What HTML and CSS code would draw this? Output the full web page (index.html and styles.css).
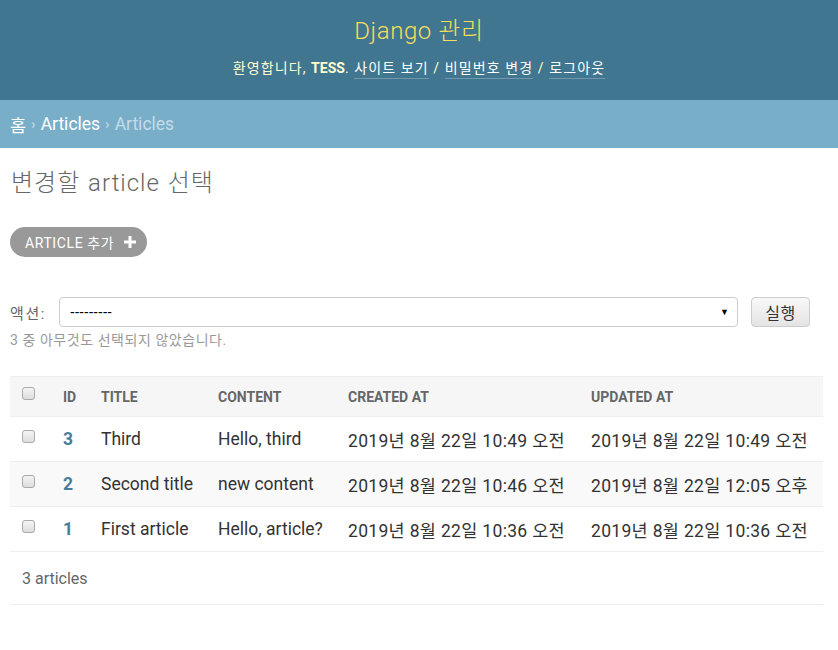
FILE: index.html
```html
<!DOCTYPE html>
<html lang="ko">
<head>
<meta charset="utf-8">
<title>Django 관리</title>
<link rel="stylesheet" href="styles.css">
</head>
<body>
<header class="header">
  <h1 class="brand">Django 관리</h1>
  <div class="user-tools">환영합니다, <strong>TESS</strong>. <a href="#">사이트 보기</a> / <a href="#">비밀번호 변경</a> / <a href="#">로그아웃</a></div>
</header>
<nav class="breadcrumbs"><a href="#">홈</a><span class="sep">›</span><a href="#">Articles</a><span class="sep">›</span><span class="current">Articles</span></nav>
<main class="content">
  <h1 class="page-title">변경할 article 선택</h1>
  <div class="tools"><a class="addlink" href="#">ARTICLE 추가 <svg class="plus" width="12" height="12" viewBox="0 0 12 12"><rect x="4.5" y="0" width="3" height="12" fill="#fff"/><rect x="0" y="4.5" width="12" height="3" fill="#fff"/></svg></a></div>
  <div class="actions">
    <label class="action-label">액션:</label>
    <div class="select"><span>---------</span><span class="arrow">▼</span></div>
    <button class="go">실행</button>
  </div>
  <div class="counter">3 중 아무것도 선택되지 않았습니다.</div>
  <table class="result">
    <colgroup><col class="c1"><col class="c2"><col class="c3"><col class="c4"><col class="c5"><col class="c6"></colgroup>
    <thead>
      <tr><th><span class="cb"></span></th><th>ID</th><th>TITLE</th><th>CONTENT</th><th>CREATED AT</th><th>UPDATED AT</th></tr>
    </thead>
    <tbody>
      <tr><td><span class="cb"></span></td><td><a class="id" href="#">3</a></td><td>Third</td><td>Hello, third</td><td class="dt">2019년 8월 22일 10:49 오전</td><td class="dt">2019년 8월 22일 10:49 오전</td></tr>
      <tr class="alt"><td><span class="cb"></span></td><td><a class="id" href="#">2</a></td><td>Second title</td><td>new content</td><td class="dt">2019년 8월 22일 10:46 오전</td><td class="dt">2019년 8월 22일 12:05 오후</td></tr>
      <tr><td><span class="cb"></span></td><td><a class="id" href="#">1</a></td><td>First article</td><td>Hello, article?</td><td class="dt">2019년 8월 22일 10:36 오전</td><td class="dt">2019년 8월 22일 10:36 오전</td></tr>
    </tbody>
  </table>
  <p class="paginator">3 articles</p>
</main>
</body>
</html>
```

FILE: styles.css
```css
* { box-sizing: border-box; }
body {
  margin: 0;
  font-family: Roboto, "Noto Sans CJK KR", "Liberation Sans", sans-serif;
  color: #333;
  background: #fff;
}
a { text-decoration: none; }
.header {
  background: #417690;
  height: 100px;
  display: flex;
  flex-direction: column;
  align-items: center;
  padding-top: 14px;
}
.brand {
  margin: 0;
  font-size: 24px;
  font-weight: 300;
  line-height: 34px;
  letter-spacing: 0.6px;
  color: #f5dd5d;
}
.user-tools {
  margin-top: 8px;
  font-size: 14px;
  line-height: 24px;
  letter-spacing: 1.1px;
  color: #ffc;
}
.user-tools strong { font-weight: 700; letter-spacing: 0; }
.user-tools a {
  color: #fff;
  padding-bottom: 2px;
  border-bottom: 1px solid rgba(255,255,255,0.25);
}
.breadcrumbs {
  background: #79aec8;
  height: 48px;
  padding: 0 10px;
  display: flex;
  align-items: center;
  gap: 5px;
  font-size: 17.5px;
  color: #c4dce8;
}
.breadcrumbs a { color: #fff; }
.breadcrumbs .sep { font-size: 15px; }
.breadcrumbs .current { color: #c4dce8; }
.content { padding: 20px 15px 0 10px; }
.page-title {
  margin: 0;
  font-size: 24px;
  font-weight: 300;
  line-height: 30px;
  letter-spacing: 1px;
  word-spacing: 1px;
  color: #666;
  padding-left: 1px;
}
.tools { margin-top: 29px; display: flex; }
.addlink {
  display: flex;
  align-items: center;
  gap: 10px;
  height: 30px;
  padding: 0 11px 0 15px;
  border-radius: 15px;
  background: #999;
  color: #fff;
  font-size: 14px;
  font-weight: 400;
  letter-spacing: 0.6px;
}
.plus { display: block; }
.actions {
  margin-top: 40px;
  display: flex;
  align-items: center;
}
.action-label { font-size: 15px; color: #666; width: 49px; letter-spacing: 1.6px; }
.select {
  width: 679px;
  height: 30px;
  border: 1px solid #ccc;
  border-radius: 4px;
  display: flex;
  align-items: center;
  justify-content: space-between;
  padding: 0 8px 0 10px;
  font-family: "Liberation Sans", sans-serif;
  font-size: 14px;
  color: #000;
}
.arrow { font-size: 9px; }
.go {
  margin-left: 13px;
  width: 59px;
  height: 30px;
  border: 1px solid #ccc;
  border-radius: 4px;
  background: linear-gradient(#f8f8f8, #e4e4e4);
  font-family: inherit;
  font-size: 16px;
  letter-spacing: 0.6px;
  color: #333;
  padding: 0;
}
.counter {
  margin-top: 5px;
  font-size: 14px;
  line-height: 17px;
  letter-spacing: 0.55px;
  color: #999;
}
.result {
  margin-top: 27px;
  width: 813px;
  table-layout: fixed;
  border-collapse: collapse;
}
.c1 { width: 41px; }
.c2 { width: 38px; }
.c3 { width: 117px; }
.c4 { width: 130px; }
.c5 { width: 243px; }
.c6 { width: 244px; }
.result th, .result td {
  text-align: left;
  padding: 0 0 0 12px;
  white-space: nowrap;
}
.result thead th {
  height: 40px;
  background: #f6f6f6;
  border-top: 1px solid #eee;
  border-bottom: 1px solid #eee;
  font-size: 14px;
  font-weight: 700;
  color: #666;
}
.result td {
  height: 45px;
  border-bottom: 1px solid #eee;
  font-size: 17.5px;
  color: #333;
}
.result td.dt { letter-spacing: 0.32px; }
.result tr.alt td { background: #f9f9f9; }
.id { color: #447e9b; font-weight: 700; }
.cb {
  display: inline-block;
  width: 13px;
  height: 13px;
  border: 1px solid #aaa;
  border-radius: 3px;
  background: linear-gradient(#f4f4f4, #ddd);
  vertical-align: -1px;
  position: relative;
  top: -3px;
}
.paginator {
  margin: 0;
  height: 53px;
  display: flex;
  align-items: center;
  padding-left: 12px;
  border-bottom: 1px solid #eee;
  width: 813px;
  font-size: 16px;
  color: #666;
}
```
